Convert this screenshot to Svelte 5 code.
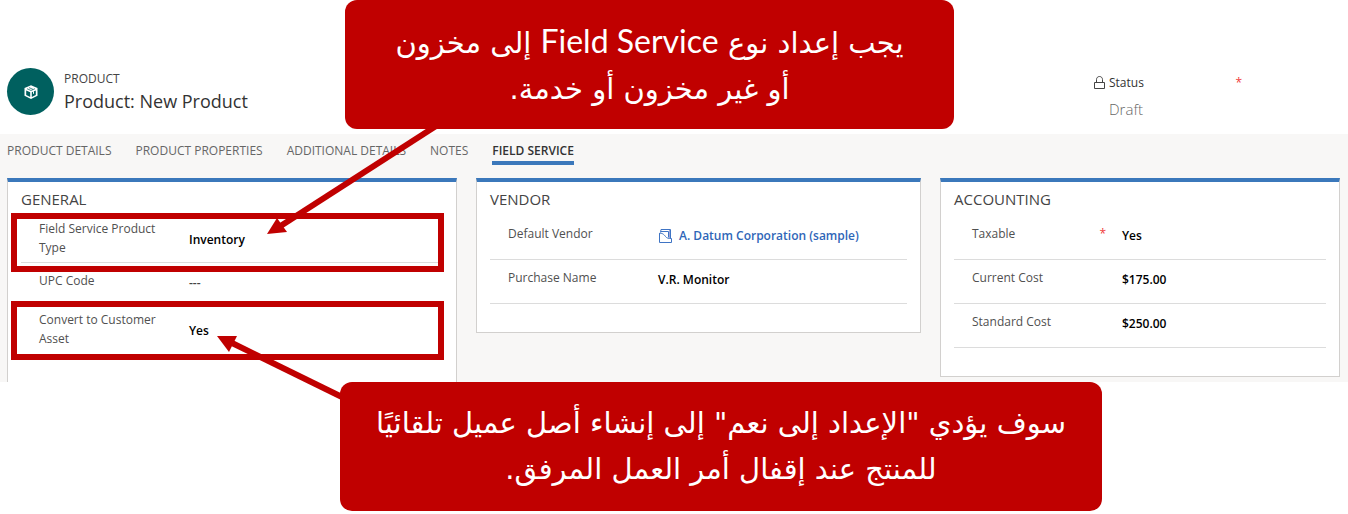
<script>
  const tabs = ['PRODUCT DETAILS', 'PRODUCT PROPERTIES', 'ADDITIONAL DETAILS', 'NOTES', 'FIELD SERVICE'];
  let active = $state('FIELD SERVICE');

  const sections = [
    {
      title: 'GENERAL',
      open: true,
      rows: [
        { label: 'Field Service Product Type', value: 'Inventory', tall: true, marked: true },
        { label: 'UPC Code', value: '---', empty: true },
        { label: 'Convert to Customer Asset', value: 'Yes', tall: true, marked: true, last: true }
      ]
    },
    {
      title: 'VENDOR',
      rows: [
        { label: 'Default Vendor', value: 'A. Datum Corporation (sample)', link: true },
        { label: 'Purchase Name', value: 'V.R. Monitor' }
      ]
    },
    {
      title: 'ACCOUNTING',
      rows: [
        { label: 'Taxable', value: 'Yes', required: true },
        { label: 'Current Cost', value: '$175.00' },
        { label: 'Standard Cost', value: '$250.00' }
      ]
    }
  ];
</script>

<main class="page">
  <header class="record">
    <div class="avatar">
      <svg width="16" height="16" viewBox="0 0 16 16" aria-hidden="true">
        <path d="M8 1.2 14.500 4v7.800L8 15 1.500 11.800V4Z" fill="#fff" />
        <path d="M3.200 6.400 7.200 8.200v4.700L3.200 10.900ZM12.800 6.400 8.800 8.200v4.700l4-2Z" fill="#00605f" />
        <path d="M4 4.700 8 6.500l4-1.800M6 3.600l4 1.800" fill="none" stroke="#00605f" stroke-width="0.7" />
        <path d="M10.500 7.200v2.600" stroke="#fff" stroke-width="1" />
      </svg>
    </div>
    <div class="names">
      <div class="entity">PRODUCT</div>
      <h1>Product: New Product</h1>
    </div>
    <div class="status">
      <div class="status-label">
        <svg width="11" height="14" viewBox="0 0 11 14" fill="none" stroke="#444" aria-hidden="true">
          <path d="M.5 6.5h10v6H.5ZM2.5 6.5V3.6C2.5 1.700 3.800.5 5.500.5s3 1.200 3 3.100v2.900" />
        </svg>
        <span>Status</span>
        <span class="star">*</span>
      </div>
      <div class="status-value">Draft</div>
    </div>
  </header>

  <div class="body">
    <nav class="tabs">
      {#each tabs as tab}
        <button class:active={active === tab} onclick={() => (active = tab)}>{tab}</button>
      {/each}
    </nav>

    <div class="sections">
      {#each sections as section}
        <section class="card" class:open={section.open}>
          <h2>{section.title}</h2>
          <dl>
            {#each section.rows as row}
              <div class="row" class:tall={row.tall} class:marked={row.marked} class:last={row.last}>
                <dt>
                  <span>{row.label}</span>
                  {#if row.required}<span class="star">*</span>{/if}
                </dt>
                <dd class:empty={row.empty}>
                  {#if row.link}
                    <a href="#vendor">
                      <svg width="14" height="16" viewBox="0 0 14 16" fill="none" stroke="#3f74c4" aria-hidden="true">
                        <path d="M1.500 5.500V14.500H13.500V10.500" />
                        <path d="M1 5.500C4 4.500 6 6.500 7.500 8.500 8.800 10.200 10 10.500 13.500 10.500" />
                        <path d="M2.500 4.500 3 1.500H12.500V10M3 3.500H10.500V9.500" />
                        <path d="M11.500 2V10" stroke="#9aa5dc" />
                      </svg>
                      <span>{row.value}</span>
                    </a>
                  {:else}{row.value}{/if}
                </dd>
              </div>
            {/each}
          </dl>
        </section>
      {/each}
    </div>
  </div>

  <svg class="arrows" width="480" height="420" viewBox="0 0 480 420" aria-hidden="true">
    <g stroke="#c00000" stroke-width="6">
      <path d="M436 126 279 227" />
      <path d="M344 398 230 342" />
    </g>
    <g fill="#c00000">
      <path d="M267 234 277 218 287 232Z" />
      <path d="M217 336 237 336 229 352Z" />
    </g>
  </svg>

  <aside class="callout first" dir="rtl" lang="ar">
    يجب إعداد نوع <span class="latin">Field Service</span> إلى مخزون<br />أو غير مخزون أو خدمة.
  </aside>
  <aside class="callout second" dir="rtl" lang="ar">
    سوف يؤدي "الإعداد إلى نعم" إلى إنشاء أصل عميل تلقائيًا<br />للمنتج عند إقفال أمر العمل المرفق.
  </aside>
</main>

<style>
  :global(body) {
    margin: 0;
    background: #fff;
  }
  .page {
    position: relative;
    min-height: 514px;
    font-family: 'Open Sans', 'Noto Sans', sans-serif;
    font-size: 12px;
    color: #333;
    overflow: hidden;
  }
  .record {
    display: flex;
    align-items: flex-start;
    padding: 68px 8px 0 7px;
    height: 66px;
  }
  .avatar {
    display: grid;
    place-items: center;
    width: 47px;
    height: 47px;
    margin-right: 10px;
    border-radius: 50%;
    background: #00605f;
  }
  .names {
    flex: 1;
  }
  .entity {
    line-height: 21px;
    color: #444;
  }
  h1 {
    margin: 0;
    font-size: 18px;
    line-height: 24px;
    font-weight: 400;
    color: #333;
  }
  .status {
    width: 246px;
    padding-top: 5px;
  }
  .status-label {
    display: flex;
    align-items: center;
    gap: 4px;
    width: 148px;
    line-height: 20px;
  }
  .status-value {
    padding-left: 15px;
    font-size: 15px;
    line-height: 32px;
    font-weight: 300;
    color: #666;
  }
  .star {
    margin-left: auto;
    color: #f03a3a;
  }
  .body {
    background: #f8f7f6;
  }
  .tabs {
    display: flex;
    gap: 24px;
    padding: 7px 7px 13px;
  }
  .tabs button {
    padding: 0;
    border: 0;
    border-bottom: 4px solid transparent;
    background: none;
    font: inherit;
    line-height: 20px;
    color: #666;
    cursor: pointer;
  }
  .tabs .active {
    border-color: #3b78bb;
    font-weight: 600;
    color: #333;
  }
  .sections {
    display: grid;
    grid-template-columns: 450fr 445fr 400fr;
    column-gap: 19px;
    align-items: start;
    padding: 0 8px 0 7px;
  }
  .card {
    padding: 4px 13px 28px;
    margin-bottom: 5px;
    border: 1px solid #d2d0ce;
    border-top: 4px solid #3b78bb;
    background: #fff;
  }
  .card.open {
    align-self: stretch;
    margin-bottom: 0;
    padding-bottom: 0;
    border-bottom: 0;
  }
  h2 {
    margin: 0;
    padding-bottom: 4px;
    font-size: 15px;
    line-height: 26px;
    font-weight: 400;
    color: #444;
  }
  dl {
    margin: 0;
  }
  .row {
    position: relative;
    display: grid;
    grid-template-columns: 134px 1fr;
    column-gap: 16px;
    padding: 8px 0 14px 18px;
    border-bottom: 1px solid #dcdcdc;
    line-height: 19px;
  }
  .row.tall {
    align-items: center;
    padding: 3px 0 5px 18px;
  }
  .row.last {
    border: 0;
  }
  .marked::after {
    content: '';
    position: absolute;
    inset: -3px -1px -10px -10px;
    border: 6px solid #c00000;
  }
  .marked.last::after {
    top: -6px;
    bottom: -7px;
  }
  dt {
    display: flex;
    color: #505050;
  }
  dd {
    margin: 0;
    padding-top: 2px;
    font-weight: 600;
    color: #000;
  }
  dd.empty {
    color: #444;
  }
  a {
    display: flex;
    align-items: center;
    gap: 7px;
    color: #2f66b8;
    text-decoration: none;
  }
  .arrows {
    position: absolute;
    top: 0;
    left: 0;
    pointer-events: none;
  }
  .callout {
    position: absolute;
    box-sizing: border-box;
    height: 129px;
    padding-top: 18px;
    border-radius: 12px;
    background: #c00000;
    color: #fff;
    text-align: center;
    font-family: 'DejaVu Sans', sans-serif;
    font-size: 29px;
    line-height: 46px;
    white-space: nowrap;
  }
  .first {
    top: 0;
    left: 345px;
    width: 609px;
  }
  .second {
    top: 382px;
    left: 340px;
    width: 762px;
  }
  .latin {
    font-family: Lato, sans-serif;
    font-size: 32px;
  }
</style>
